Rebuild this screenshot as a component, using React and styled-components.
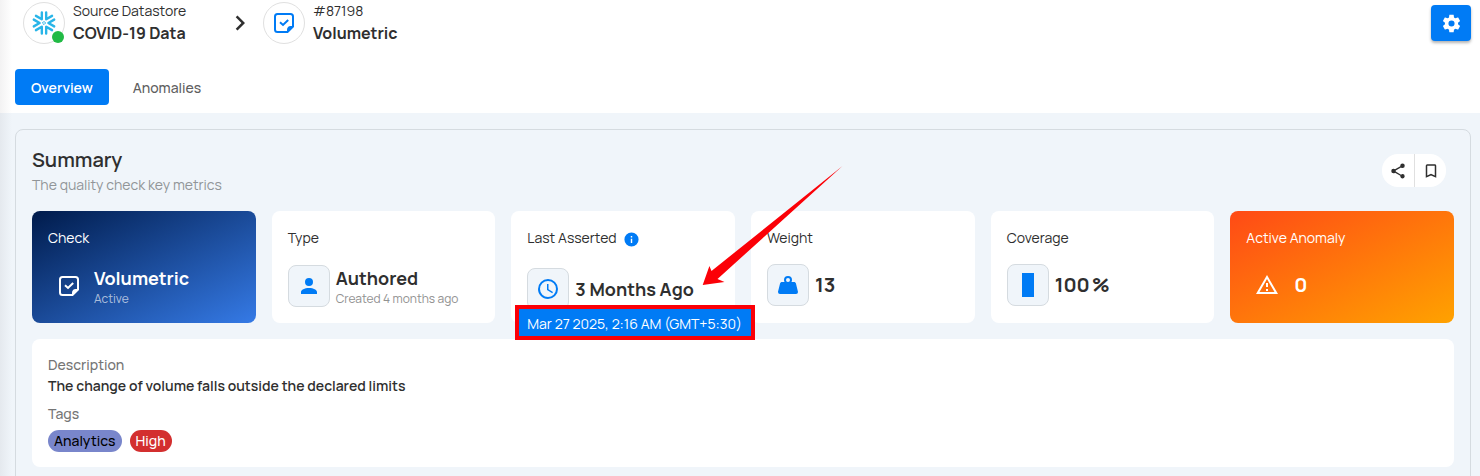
import React from "react";
import styled, { createGlobalStyle, css } from "styled-components";

const GlobalStyle = createGlobalStyle`
  *, *::before, *::after { box-sizing: border-box; }
  body {
    margin: 0;
    background: #f0f5fa;
    color: #2f2f2f;
    font-family: "Manrope", Inter, "Liberation Sans", sans-serif;
    font-size: 14px;
    line-height: 21px;
  }
  h1, h2, p, dl, dd, dt, ul { margin: 0; padding: 0; }
  button { font: inherit; border: 0; padding: 0; cursor: pointer; }
`;

const paths = {
  cog: "M12,15.5A3.5,3.5 0 0,1 8.5,12A3.5,3.5 0 0,1 12,8.5A3.5,3.5 0 0,1 15.5,12A3.5,3.5 0 0,1 12,15.5M19.43,12.97C19.47,12.65 19.5,12.33 19.5,12C19.5,11.67 19.47,11.34 19.43,11L21.54,9.37C21.73,9.22 21.78,8.95 21.66,8.73L19.66,5.27C19.54,5.05 19.27,4.96 19.05,5.05L16.56,6.05C16.04,5.66 15.5,5.32 14.87,5.07L14.5,2.42C14.46,2.18 14.25,2 14,2H10C9.75,2 9.54,2.18 9.5,2.42L9.13,5.07C8.5,5.32 7.96,5.66 7.44,6.05L4.95,5.05C4.73,4.96 4.46,5.05 4.34,5.27L2.34,8.73C2.21,8.95 2.27,9.22 2.46,9.37L4.57,11C4.53,11.34 4.5,11.67 4.5,12C4.5,12.33 4.53,12.65 4.57,12.97L2.46,14.63C2.27,14.78 2.21,15.05 2.34,15.27L4.34,18.73C4.46,18.95 4.73,19.03 4.95,18.95L7.44,17.94C7.96,18.34 8.5,18.68 9.13,18.93L9.5,21.58C9.54,21.82 9.75,22 10,22H14C14.25,22 14.46,21.82 14.5,21.58L14.87,18.93C15.5,18.67 16.04,18.34 16.56,17.94L19.05,18.95C19.27,19.03 19.54,18.95 19.66,18.73L21.66,15.27C21.78,15.05 21.73,14.78 21.54,14.63L19.43,12.97Z",
  weight: "M12,3A4,4 0 0,1 16,7C16,7.73 15.81,8.41 15.46,9H18C18.95,9 19.75,9.67 19.95,10.56C21.96,18.57 22,18.78 22,19A2,2 0 0,1 20,21H4A2,2 0 0,1 2,19C2,18.78 2.04,18.57 4.05,10.56C4.25,9.67 5.05,9 6,9H8.54C8.19,8.41 8,7.73 8,7A4,4 0 0,1 12,3M12,5A2,2 0 0,0 10,7A2,2 0 0,0 12,9A2,2 0 0,0 14,7A2,2 0 0,0 12,5Z",
  account: "M12,4A4,4 0 0,1 16,8A4,4 0 0,1 12,12A4,4 0 0,1 8,8A4,4 0 0,1 12,4M12,14C16.42,14 20,15.79 20,18V20H4V18C4,15.79 7.58,14 12,14Z",
  clock: "M12,20A8,8 0 0,0 20,12A8,8 0 0,0 12,4A8,8 0 0,0 4,12A8,8 0 0,0 12,20M12,2A10,10 0 0,1 22,12A10,10 0 0,1 12,22C6.47,22 2,17.5 2,12A10,10 0 0,1 12,2M12.5,7V12.25L17,14.92L16.25,16.15L11,13V7H12.5Z",
  info: "M13,9H11V7H13M13,17H11V11H13M12,2A10,10 0 0,0 2,12A10,10 0 0,0 12,22A10,10 0 0,0 22,12A10,10 0 0,0 12,2Z",
  alert: "M12,2L1,21H23M12,6L19.53,19H4.47M11,10V14H13V10M11,16V18H13V16",
  share: "M18,16.08C17.24,16.08 16.56,16.38 16.04,16.85L8.91,12.7C8.96,12.47 9,12.24 9,12C9,11.76 8.96,11.53 8.91,11.3L15.96,7.19C16.5,7.69 17.21,8 18,8A3,3 0 0,0 21,5A3,3 0 0,0 18,2A3,3 0 0,0 15,5C15,5.24 15.04,5.47 15.09,5.7L8.04,9.81C7.5,9.31 6.79,9 6,9A3,3 0 0,0 3,12A3,3 0 0,0 6,15C6.79,15 7.5,14.69 8.04,14.19L15.16,18.34C15.11,18.55 15.08,18.77 15.08,19C15.08,20.61 16.39,21.91 18,21.91C19.61,21.91 20.92,20.61 20.92,19A2.92,2.92 0 0,0 18,16.08Z",
  bookmark: "M17,18L12,15.82L7,18V5H17M17,3H7A2,2 0 0,0 5,5V21L12,18L19,21V5C19,3.89 18.1,3 17,3Z",
  chevron: "M8.59,16.58L13.17,12L8.59,7.41L10,6L16,12L10,18L8.59,16.58Z",
  coverage: "M6,0H18V24H6Z",
};

const Icon = ({ name, size = 24 }) => (
  <svg width={size} height={size} viewBox="0 0 24 24" fill="currentColor" aria-hidden="true">
    <path d={paths[name]} />
  </svg>
);

const CheckNote = () => (
  <svg width="24" height="24" viewBox="0 0 24 24" fill="none" stroke="currentColor" strokeWidth="2" aria-hidden="true">
    <path d="M21 15.5V5.5C21 4.1 19.9 3 18.5 3H5.5C4.1 3 3 4.1 3 5.5V18.5C3 19.9 4.1 21 5.5 21H15.5Z" />
    <path d="M15 22V18.5C15 16.6 16.6 15 18.5 15H22L15 22Z" fill="currentColor" stroke="none" />
    <path d="M8 11.3L11 14L16.2 9" />
  </svg>
);

const Snowflake = () => (
  <svg width="24" height="24" viewBox="-12 -12 24 24" fill="none" stroke="#29b5e8" aria-hidden="true">
    {[0, 60, 120, 180, 240, 300].map((angle) => (
      <path
        key={angle}
        d="M10.2 -3.4L4.4 0L10.2 3.4"
        strokeWidth="2.4"
        strokeLinecap="round"
        strokeLinejoin="round"
        transform={`rotate(${angle})`}
      />
    ))}
    <path d="M0 -1.600L1.600 0L0 1.600L-1.600 0Z" strokeWidth="1" strokeLinejoin="round" />
  </svg>
);

const Page = styled.div`
  position: relative;
  height: 100vh;
  overflow: hidden;
  &::before {
    content: "";
    position: absolute;
    inset: 0 auto 0 0;
    width: 12px;
    background: linear-gradient(to right, rgba(50, 40, 50, 0.06), rgba(50, 40, 50, 0));
    pointer-events: none;
  }
`;

const Header = styled.header`
  padding: 1px 9px 8px 15px;
  background: #fff;
`;

const HeaderRow = styled.div`
  display: flex;
  align-items: center;
  justify-content: space-between;
  height: 44px;
  padding-left: 8px;
`;

const Breadcrumb = styled.nav`
  display: flex;
  align-items: center;
  gap: 8px;
`;

const Crumb = styled.div`
  display: flex;
  align-items: center;
  gap: 8px;
  min-width: 194px;
`;

const CrumbText = styled.div`
  padding-bottom: 2px;
`;

const Avatar = styled.div`
  position: relative;
  display: grid;
  place-items: center;
  width: 42px;
  height: 42px;
  border: 1px solid #e0e0e0;
  border-radius: 50%;
  color: #007bf5;
`;

const StatusDot = styled.span`
  position: absolute;
  right: 0;
  bottom: 0;
  width: 12px;
  height: 12px;
  border-radius: 50%;
  background: #21ba45;
`;

const CrumbKind = styled.p`
  font-size: 14px;
  line-height: 22px;
`;

const CrumbName = styled.p`
  font-size: 16px;
  font-weight: 700;
  line-height: 22px;
`;

const SettingsButton = styled.button`
  display: grid;
  place-items: center;
  width: 40px;
  height: 36px;
  border-radius: 4px;
  background: #007bf5;
  color: #fff;
  box-shadow: 0 2px 3px rgba(0, 0, 0, 0.3);
`;

const Tabs = styled.div`
  display: flex;
  gap: 8px;
  margin-top: 24px;
`;

const Tab = styled.button`
  height: 36px;
  padding: 0 16px;
  border-radius: 4px;
  font-size: 14px;
  font-weight: ${(p) => (p.$active ? 600 : 500)};
  background: ${(p) => (p.$active ? "#007bf5" : "transparent")};
  color: ${(p) => (p.$active ? "#fff" : "#5f5f5f")};
`;

const Main = styled.main`
  padding: 16px 9px 16px 15px;
`;

const Panel = styled.section`
  padding: 16px;
  border: 1px solid #d5dbe0;
  border-radius: 8px;
`;

const PanelHead = styled.div`
  display: flex;
  align-items: center;
  justify-content: space-between;
  margin-bottom: 16px;
`;

const Title = styled.h1`
  font-size: 20px;
  font-weight: 600;
  line-height: 28px;
`;

const Subtitle = styled.p`
  color: #919598;
`;

const Actions = styled.div`
  display: flex;
  margin-right: 8px;
  overflow: hidden;
  border-radius: 16px;
  background: #fff;
`;

const ActionButton = styled.button`
  display: grid;
  place-items: center;
  width: 32px;
  height: 33px;
  background: transparent;
  color: #2f2f2f;
  & + & { border-left: 1px solid #e0e0e0; }
`;

const Cards = styled.div`
  display: grid;
  grid-template-columns: repeat(6, minmax(0, 1fr));
  gap: 16px;
  margin-bottom: 16px;
`;

const tones = {
  plain: css`background: #fff;`,
  navy: css`
    background: linear-gradient(to bottom right, #001b4b, #357ae6);
    color: #fff;
  `,
  orange: css`
    background: linear-gradient(to bottom right, #ff4a16, #ffa200);
    color: #fff;
  `,
};

const CardBox = styled.article`
  position: relative;
  height: 112px;
  padding: 16px;
  border-radius: 8px;
  ${(p) => tones[p.$tone]}
`;

const CardLabel = styled.div`
  display: flex;
  gap: 6px;
  margin-bottom: 16px;
`;

const InfoButton = styled.button`
  display: grid;
  place-items: center;
  width: 17px;
  height: 25px;
  background: transparent;
  color: #007bf5;
`;

const CardBody = styled.div`
  display: flex;
  align-items: center;
  gap: ${(p) => (p.$wide ? "6px" : "4px")};
`;

const CardText = styled.div`
  padding-top: ${(p) => (p.$noted ? "2px" : "0")};
`;

const Tile = styled.div`
  display: grid;
  flex: none;
  place-items: center;
  width: 42px;
  height: 42px;
  ${(p) =>
    p.$boxed &&
    css`
      border: 1px solid #d5dbe0;
      border-radius: 8px;
      background: #f0f5fa;
      color: #007bf5;
    `}
`;

const Value = styled.p`
  display: flex;
  gap: 2px;
  font-size: ${(p) => (p.$large ? "20px" : "18px")};
  font-weight: 700;
  line-height: 24px;
  white-space: nowrap;
`;

const Note = styled.p`
  font-size: 12px;
  line-height: 18px;
  color: ${(p) => (p.$light ? "rgba(255, 255, 255, 0.65)" : "#919191")};
`;

const Tooltip = styled.div`
  position: absolute;
  z-index: 2;
  top: 94px;
  left: 4px;
  width: 240px;
  padding: 4px 8px 2px;
  border: 4px solid #fb0007;
  background: #007bf5;
  color: #fff;
  white-space: nowrap;
`;

const Arrow = styled.svg`
  position: absolute;
  z-index: 3;
  top: -46px;
  left: 191px;
  width: 141px;
  height: 122px;
  pointer-events: none;
`;

const Details = styled.dl`
  padding: 16px 16px 15px;
  border-radius: 8px;
  background: #fff;
`;

const Term = styled.dt`
  line-height: 20px;
  font-weight: 500;
  color: #757575;
`;

const Text = styled.dd`
  margin-bottom: 8px;
  font-weight: 600;
`;

const Tags = styled.dd`
  display: flex;
  gap: 8px;
  margin-top: 6px;
`;

const Tag = styled.span`
  height: 22px;
  padding: 0 6px;
  border-radius: 11px;
  line-height: 22px;
  font-weight: 500;
  background: ${(p) => p.$bg};
  color: ${(p) => p.$color};
`;

function MetricCard({ label, icon, value, unit, note, tone = "plain", large, info, children }) {
  const boxed = tone === "plain";
  return (
    <CardBox $tone={tone}>
      <CardLabel>
        <span>{label}</span>
        {info && (
          <InfoButton type="button" aria-label="More information">
            <Icon name="info" size={17} />
          </InfoButton>
        )}
      </CardLabel>
      <CardBody $wide={boxed || large}>
        <Tile $boxed={boxed}>{icon}</Tile>
        <CardText $noted={Boolean(note)}>
          <Value $large={large}>
            <span>{value}</span>
            {unit && <span>{unit}</span>}
          </Value>
          {note && <Note $light={!boxed}>{note}</Note>}
        </CardText>
      </CardBody>
      {children}
    </CardBox>
  );
}

export default function App() {
  return (
    <Page>
      <GlobalStyle />
      <Header>
        <HeaderRow>
          <Breadcrumb aria-label="Breadcrumb">
            <Crumb>
              <Avatar>
                <Snowflake />
                <StatusDot />
              </Avatar>
              <CrumbText>
                <CrumbKind>Source Datastore</CrumbKind>
                <CrumbName>COVID-19 Data</CrumbName>
              </CrumbText>
            </Crumb>
            <Icon name="chevron" size={30} />
            <Crumb>
              <Avatar>
                <CheckNote />
              </Avatar>
              <CrumbText>
                <CrumbKind>#87198</CrumbKind>
                <CrumbName>Volumetric</CrumbName>
              </CrumbText>
            </Crumb>
          </Breadcrumb>
          <SettingsButton type="button" aria-label="Settings">
            <Icon name="cog" size={21} />
          </SettingsButton>
        </HeaderRow>
        <Tabs role="tablist">
          <Tab type="button" role="tab" aria-selected="true" $active>Overview</Tab>
          <Tab type="button" role="tab" aria-selected="false">Anomalies</Tab>
        </Tabs>
      </Header>
      <Main>
        <Panel>
          <PanelHead>
            <div>
              <Title>Summary</Title>
              <Subtitle>The quality check key metrics</Subtitle>
            </div>
            <Actions>
              <ActionButton type="button" aria-label="Share"><Icon name="share" size={18} /></ActionButton>
              <ActionButton type="button" aria-label="Bookmark"><Icon name="bookmark" size={18} /></ActionButton>
            </Actions>
          </PanelHead>
          <Cards>
            <MetricCard tone="navy" label="Check" icon={<CheckNote />} value="Volumetric" note="Active" />
            <MetricCard label="Type" icon={<Icon name="account" />} value="Authored" note="Created 4 months ago" />
            <MetricCard label="Last Asserted" icon={<Icon name="clock" />} value="3 Months Ago" info>
              <Tooltip role="tooltip">Mar 27 2025, 2:16 AM (GMT+5:30)</Tooltip>
              <Arrow viewBox="0 0 141 122" aria-hidden="true">
                <path d="M0.700 120L7.400 101L9.500 106L140.500 1L15.500 114L22.500 117Z" fill="#fb0007" />
              </Arrow>
            </MetricCard>
            <MetricCard label="Weight" icon={<Icon name="weight" />} value="13" large />
            <MetricCard label="Coverage" icon={<Icon name="coverage" />} value="100" unit="%" large />
            <MetricCard tone="orange" label="Active Anomaly" icon={<Icon name="alert" />} value="0" large />
          </Cards>
          <Details>
            <Term>Description</Term>
            <Text>The change of volume falls outside the declared limits</Text>
            <Term>Tags</Term>
            <Tags>
              <Tag $bg="#7986cb" $color="#000">Analytics</Tag>
              <Tag $bg="#d32f2f" $color="#fff">High</Tag>
            </Tags>
          </Details>
        </Panel>
      </Main>
    </Page>
  );
}
